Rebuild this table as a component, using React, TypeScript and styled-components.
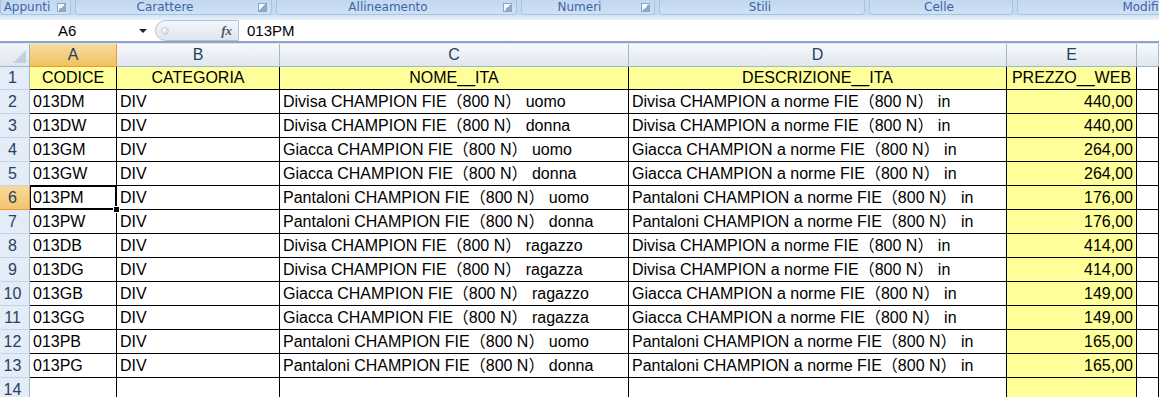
import styled, { createGlobalStyle } from "styled-components";

const GlobalStyle = createGlobalStyle`
  html, body {
    margin: 0;
    padding: 0;
    background: #fff;
    overflow: hidden;
  }
  body {
    font-family: "Liberation Sans", Arial, "Noto Sans CJK SC", sans-serif;
  }
  * {
    box-sizing: border-box;
  }
`;

const COLS = "30px 87px 163px 349px 378px 130px 22px";

const Window = styled.div`
  width: 1159px;
  height: 397px;
  overflow: hidden;
  display: flex;
  flex-direction: column;
  background: #fff;
  & > * {
    flex: none;
  }
`;

const Ribbon = styled.div`
  display: flex;
  gap: 4px;
  height: 15px;
  background: #c4d8f0;
  overflow: hidden;
`;

const Group = styled.div<{ $w: number }>`
  flex: none;
  width: ${(p) => p.$w}px;
  display: flex;
  align-items: center;
  height: 15px;
  padding-right: 4px;
  border: 1px solid #a9c3e3;
  border-top: none;
  border-radius: 0 0 4px 4px;
  background: linear-gradient(#c1d7f0, #d0e1f5);
`;

const GroupLabel = styled.span`
  flex: 1;
  text-align: center;
  font-family: "DejaVu Sans", "Liberation Sans", sans-serif;
  font-size: 12px;
  line-height: 13px;
  color: #3d65a3;
  white-space: nowrap;
`;

const Launcher = styled.span`
  flex: none;
  width: 9px;
  height: 9px;
  margin-left: 4px;
  border: 1px solid #8aa5c8;
  background: linear-gradient(135deg, #f4f8fd 50%, #8fa9cb 50%);
`;

const Strip = styled.div`
  height: 5px;
  background: linear-gradient(#d3e2f4, #eaf1fa);
`;

const FormulaBar = styled.div`
  display: flex;
  align-items: stretch;
  height: 23px;
  background: #fff;
  border-bottom: 2px solid #8ea6c4;
`;

const NameBox = styled.div`
  width: 155px;
  display: flex;
  align-items: center;
  padding-left: 58px;
  font-size: 15px;
  color: #000;
  position: relative;
`;

const Arrow = styled.span`
  position: absolute;
  right: 8px;
  top: 9px;
  border-left: 4px solid transparent;
  border-right: 4px solid transparent;
  border-top: 4px solid #222;
`;

const FxPill = styled.div`
  width: 84px;
  display: flex;
  align-items: center;
  justify-content: space-between;
  padding: 0 6px 0 5px;
  border: 1px solid #b3c3d7;
  border-radius: 11px 0 0 11px;
  background: linear-gradient(#f4f7fb, #dde5ef);
`;

const Knob = styled.span`
  width: 8px;
  height: 8px;
  border-radius: 50%;
  background: radial-gradient(circle at 35% 35%, #ffffff, #b7c3d2);
  border: 1px solid #c6d0dc;
`;

const Fx = styled.span`
  font-family: "Liberation Serif", "Times New Roman", serif;
  font-style: italic;
  font-weight: bold;
  font-size: 13px;
  color: #555;
`;

const Formula = styled.div`
  flex: 1;
  display: flex;
  align-items: center;
  padding-left: 8px;
  font-size: 15px;
  color: #000;
`;

const Gap = styled.div`
  height: 1px;
  background: #dbe5f1;
`;

const Row = styled.div<{ $h: number }>`
  display: grid;
  grid-template-columns: ${COLS};
  grid-template-rows: ${(p) => p.$h}px;
  height: ${(p) => p.$h}px;
`;

const Corner = styled.div`
  position: relative;
  background: linear-gradient(#f2f5f9, #dfe6ee);
  border-right: 1px solid #9eb6ce;
  border-bottom: 1px solid #9eb6ce;
  &::after {
    content: "";
    position: absolute;
    right: 3px;
    bottom: 3px;
    border-left: 13px solid transparent;
    border-bottom: 13px solid #c3cfdc;
  }
`;

const ColHead = styled.div<{ $active?: boolean }>`
  display: flex;
  align-items: center;
  justify-content: center;
  font-size: 16px;
  color: #27415f;
  background: ${(p) =>
    p.$active
      ? "linear-gradient(#f9dca4, #f1c15f)"
      : "linear-gradient(#f8fafc, #dfe6ee)"};
  border-right: 1px solid ${(p) => (p.$active ? "#f29536" : "#9eb6ce")};
  border-bottom: 1px solid ${(p) => (p.$active ? "#f29536" : "#9eb6ce")};
`;

const RowHead = styled.div<{ $active?: boolean }>`
  display: flex;
  align-items: center;
  justify-content: center;
  padding-right: 4px;
  font-size: 16px;
  color: #27415f;
  background: ${(p) => (p.$active ? "linear-gradient(#f9d99c, #f3c56c)" : "#e4ecf7")};
  border-right: 1px solid ${(p) => (p.$active ? "#f29536" : "#9eb6ce")};
  border-bottom: 1px solid ${(p) => (p.$active ? "#f29536" : "#c5d3e3")};
`;

const Cell = styled.div<{ $fill?: boolean; $align?: "left" | "center" | "right" }>`
  position: relative;
  display: flex;
  align-items: flex-end;
  justify-content: ${(p) =>
    p.$align === "right" ? "flex-end" : p.$align === "center" ? "center" : "flex-start"};
  padding: 0 3px 2px 3px;
  font-size: 16px;
  line-height: 18px;
  color: #000;
  white-space: pre;
  overflow: hidden;
  background: ${(p) => (p.$fill ? "#ffff99" : "#fff")};
  border-right: 1px solid #000;
  border-bottom: 1px solid #000;
`;

const Selected = styled(Cell)`
  overflow: visible;
  box-shadow: inset 0 0 0 1px #000;
`;

const Handle = styled.span`
  position: absolute;
  right: -4px;
  bottom: -4px;
  width: 7px;
  height: 7px;
  background: #000;
  border: 1px solid #fff;
  z-index: 2;
`;

const groups = [
  { label: "Appunti", w: 71, launcher: true },
  { label: "Carattere", w: 197, launcher: true },
  { label: "Allineamento", w: 241, launcher: true },
  { label: "Numeri", w: 134, launcher: true },
  { label: "Stili", w: 206, launcher: false },
  { label: "Celle", w: 144, launcher: false },
  { label: "Modifica", w: 278, launcher: true },
];

type Item = [string, string, string, string];

const items: Item[] = [
  ["013DM", "Divisa", "uomo", "440,00"],
  ["013DW", "Divisa", "donna", "440,00"],
  ["013GM", "Giacca", "uomo", "264,00"],
  ["013GW", "Giacca", "donna", "264,00"],
  ["013PM", "Pantaloni", "uomo", "176,00"],
  ["013PW", "Pantaloni", "donna", "176,00"],
  ["013DB", "Divisa", "ragazzo", "414,00"],
  ["013DG", "Divisa", "ragazza", "414,00"],
  ["013GB", "Giacca", "ragazzo", "149,00"],
  ["013GG", "Giacca", "ragazza", "149,00"],
  ["013PB", "Pantaloni", "uomo", "165,00"],
  ["013PG", "Pantaloni", "donna", "165,00"],
];

export default function App() {
  return (
    <Window>
      <GlobalStyle />
      <Ribbon>
        {groups.map((g) => (
          <Group key={g.label} $w={g.w}>
            <GroupLabel>{g.label}</GroupLabel>
            {g.launcher && <Launcher />}
          </Group>
        ))}
      </Ribbon>
      <Strip />
      <FormulaBar>
        <NameBox>
          A6
          <Arrow />
        </NameBox>
        <FxPill>
          <Knob />
          <Fx>fx</Fx>
        </FxPill>
        <Formula>013PM</Formula>
      </FormulaBar>
      <Gap />

      <Row $h={23}>
        <Corner />
        <ColHead $active>A</ColHead>
        <ColHead>B</ColHead>
        <ColHead>C</ColHead>
        <ColHead>D</ColHead>
        <ColHead>E</ColHead>
        <ColHead />
      </Row>

      <Row $h={23}>
        <RowHead>1</RowHead>
        <Cell $fill $align="center">CODICE</Cell>
        <Cell $fill $align="center">CATEGORIA</Cell>
        <Cell $fill $align="center">NOME__ITA</Cell>
        <Cell $fill $align="center">DESCRIZIONE__ITA</Cell>
        <Cell $fill $align="center">PREZZO__WEB</Cell>
        <Cell />
      </Row>

      {items.map(([code, kind, who, price], i) => {
        const n = i + 2;
        const active = code === "013PM";
        const CodeCell = active ? Selected : Cell;
        return (
          <Row $h={24} key={code}>
            <RowHead $active={active}>{n}</RowHead>
            <CodeCell>
              {code}
              {active && <Handle />}
            </CodeCell>
            <Cell>DIV</Cell>
            <Cell>{`${kind} CHAMPION FIE（800 N） ${who}`}</Cell>
            <Cell>{`${kind} CHAMPION a norme FIE（800 N） in`}</Cell>
            <Cell $fill $align="right">{price}</Cell>
            <Cell />
          </Row>
        );
      })}

      <Row $h={24}>
        <RowHead>14</RowHead>
        <Cell />
        <Cell />
        <Cell />
        <Cell />
        <Cell $fill />
        <Cell />
      </Row>
    </Window>
  );
}
